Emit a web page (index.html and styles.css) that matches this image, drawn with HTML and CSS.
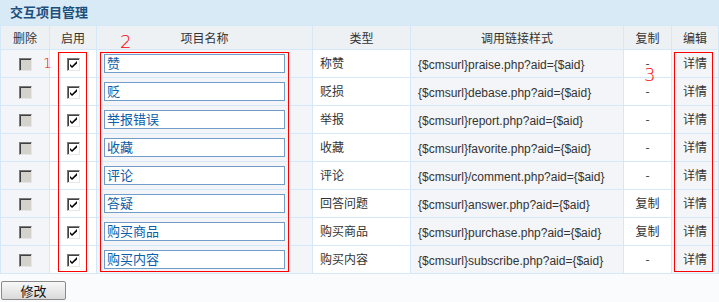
FILE: index.html
```html
<!DOCTYPE html>
<html>
<head>
<meta charset="utf-8">
<link rel="stylesheet" href="styles.css">
</head>
<body>
<div class="page">
  <div class="title">交互项目管理</div>
  <table class="grid">
    <colgroup>
      <col class="c1"><col class="c2"><col class="c3"><col class="c4"><col class="c5"><col class="c6"><col class="c7">
    </colgroup>
    <thead>
      <tr><th>删除</th><th>启用</th><th>项目名称</th><th>类型</th><th>调用链接样式</th><th>复制</th><th>编辑</th></tr>
    </thead>
    <tbody>
      <tr><td class="pat"><span class="cb dis"></span></td><td><span class="cb on"><svg viewBox="0 0 9 9"><path d="M1 4 L3 6 L8 1 L8 3.5 L3 8 L1 6Z" fill="#000"/></svg></span></td><td class="pat"><div class="inp">赞</div></td><td class="txt">称赞</td><td class="pat txt url">{$cmsurl}praise.php?aid={$aid}</td><td class="mid">-</td><td class="pat mid">详情</td></tr>
      <tr><td class="pat"><span class="cb dis"></span></td><td><span class="cb on"><svg viewBox="0 0 9 9"><path d="M1 4 L3 6 L8 1 L8 3.5 L3 8 L1 6Z" fill="#000"/></svg></span></td><td class="pat"><div class="inp">贬</div></td><td class="txt">贬损</td><td class="pat txt url">{$cmsurl}debase.php?aid={$aid}</td><td class="mid">-</td><td class="pat mid">详情</td></tr>
      <tr><td class="pat"><span class="cb dis"></span></td><td><span class="cb on"><svg viewBox="0 0 9 9"><path d="M1 4 L3 6 L8 1 L8 3.5 L3 8 L1 6Z" fill="#000"/></svg></span></td><td class="pat"><div class="inp">举报错误</div></td><td class="txt">举报</td><td class="pat txt url">{$cmsurl}report.php?aid={$aid}</td><td class="mid">-</td><td class="pat mid">详情</td></tr>
      <tr><td class="pat"><span class="cb dis"></span></td><td><span class="cb on"><svg viewBox="0 0 9 9"><path d="M1 4 L3 6 L8 1 L8 3.5 L3 8 L1 6Z" fill="#000"/></svg></span></td><td class="pat"><div class="inp">收藏</div></td><td class="txt">收藏</td><td class="pat txt url">{$cmsurl}favorite.php?aid={$aid}</td><td class="mid">-</td><td class="pat mid">详情</td></tr>
      <tr><td class="pat"><span class="cb dis"></span></td><td><span class="cb on"><svg viewBox="0 0 9 9"><path d="M1 4 L3 6 L8 1 L8 3.5 L3 8 L1 6Z" fill="#000"/></svg></span></td><td class="pat"><div class="inp">评论</div></td><td class="txt">评论</td><td class="pat txt url">{$cmsurl}/comment.php?aid={$aid}</td><td class="mid">-</td><td class="pat mid">详情</td></tr>
      <tr><td class="pat"><span class="cb dis"></span></td><td><span class="cb on"><svg viewBox="0 0 9 9"><path d="M1 4 L3 6 L8 1 L8 3.5 L3 8 L1 6Z" fill="#000"/></svg></span></td><td class="pat"><div class="inp">答疑</div></td><td class="txt">回答问题</td><td class="pat txt url">{$cmsurl}answer.php?aid={$aid}</td><td class="mid">复制</td><td class="pat mid">详情</td></tr>
      <tr><td class="pat"><span class="cb dis"></span></td><td><span class="cb on"><svg viewBox="0 0 9 9"><path d="M1 4 L3 6 L8 1 L8 3.5 L3 8 L1 6Z" fill="#000"/></svg></span></td><td class="pat"><div class="inp">购买商品</div></td><td class="txt">购买商品</td><td class="pat txt url">{$cmsurl}purchase.php?aid={$aid}</td><td class="mid">复制</td><td class="pat mid">详情</td></tr>
      <tr><td class="pat"><span class="cb dis"></span></td><td><span class="cb on"><svg viewBox="0 0 9 9"><path d="M1 4 L3 6 L8 1 L8 3.5 L3 8 L1 6Z" fill="#000"/></svg></span></td><td class="pat"><div class="inp">购买内容</div></td><td class="txt">购买内容</td><td class="pat txt url">{$cmsurl}subscribe.php?aid={$aid}</td><td class="mid">-</td><td class="pat mid">详情</td></tr>
    </tbody>
  </table>
  <div class="actions"><button class="btn">修改</button></div>

  <div class="mark box1"></div>
  <div class="mark box2"></div>
  <div class="mark box3"></div>
  <span class="num n1">1</span>
  <span class="num n2">2</span>
  <span class="num n3">3</span>
</div>
</body>
</html>
```

FILE: styles.css
```css
html, body {
  margin: 0;
  padding: 0;
  background: #fff;
}
body {
  font-family: "Liberation Sans", "Noto Sans CJK SC", sans-serif;
  font-size: 12px;
  line-height: 14px;
  color: #333;
}
.page {
  position: relative;
  width: 719px;
  height: 302px;
  overflow: hidden;
  background: #fafbfc;
}
.title {
  height: 25px;
  line-height: 24px;
  padding-left: 10px;
  background: #d9eaf7;
  color: #1d4f7c;
  font-weight: bold;
  font-size: 13px;
  font-family: "Noto Sans CJK SC", sans-serif;
  box-sizing: border-box;
}
.grid {
  border-collapse: collapse;
  table-layout: fixed;
  width: 718px;
  margin-left: 0;
}
.grid col.c1 { width: 49px; }
.grid col.c2 { width: 47px; }
.grid col.c3 { width: 216px; }
.grid col.c4 { width: 98px; }
.grid col.c5 { width: 213px; }
.grid col.c6 { width: 48px; }
.grid col.c7 { width: 47px; }
.grid th, .grid td {
  border: 1px solid #d5e8f7;
  padding: 0;
  line-height: 14px;
}
.grid th {
  height: 23px;
  background: #eef1f3;
  font-weight: normal;
  font-family: "Noto Sans CJK SC", sans-serif;
  font-size: 12px;
  color: #333;
  text-align: center;
}
.grid td {
  height: 27px;
  background: #fff;
  text-align: center;
}
.grid td.pat {
  background: #f3f5f8;
}
.grid td.txt {
  text-align: left;
  padding-left: 7px;
  padding-bottom: 2px;
  height: 25px;
  font-family: "Noto Sans CJK SC", sans-serif;
}
.grid td.url {
  font-family: "Liberation Sans", sans-serif;
  padding-left: 7px;
  padding-top: 2px;
  padding-bottom: 0;
}
.grid td.mid {
  font-family: "Noto Sans CJK SC", sans-serif;
  padding-bottom: 2px;
  height: 25px;
}
.cb {
  display: inline-flex;
  align-items: center;
  justify-content: center;
  width: 13px;
  height: 13px;
  box-sizing: border-box;
  border-top: 1px solid #7a7a7a;
  border-left: 1px solid #7a7a7a;
  border-right: 1px solid #e6e6e6;
  border-bottom: 1px solid #e6e6e6;
  vertical-align: middle;
}
.cb.dis {
  background: #d4d2cc;
  box-shadow: inset 1px 1px 0 #404040;
}
.cb.on {
  background: #fff;
  box-shadow: inset 1px 1px 0 #404040;
}
.cb svg {
  display: block;
  width: 9px;
  height: 9px;
  margin: 1px 0 0 1px;
}
.inp {
  width: 181px;
  height: 19px;
  margin-left: 7px;
  box-sizing: border-box;
  border: 1px solid #6f9cc9;
  background: #fff;
  color: #0b5ea8;
  font-family: "Noto Sans CJK SC", sans-serif;
  font-size: 13px;
  line-height: 15px;
  text-align: left;
  padding-left: 2px;
  overflow: hidden;
}
.actions {
  padding: 7px 0 0 1px;
}
.btn {
  display: block;
  width: 65px;
  height: 19px;
  padding: 0;
  border: 1px solid #8a8a8a;
  border-radius: 2px;
  background: linear-gradient(#f8f8f8, #dadada);
  font-family: "Noto Sans CJK SC", sans-serif;
  font-size: 13px;
  line-height: 15px;
  color: #111;
}
.mark {
  position: absolute;
  border: 1px solid #ff0000;
  box-sizing: border-box;
}
.box1 { left: 58px; top: 52px; width: 29px; height: 220px; }
.box2 { left: 100px; top: 52px; width: 189px; height: 220px; }
.box3 { left: 674px; top: 52px; width: 39px; height: 220px; }
.num {
  position: absolute;
  color: #ff0000;
  font-family: "DejaVu Sans", sans-serif;
  font-weight: 200;
  line-height: 1;
}
.n1 { left: 43px; top: 56px; font-size: 14px; }
.n2 { left: 120px; top: 33px; font-size: 18px; }
.n3 { left: 644px; top: 66px; font-size: 18px; }
```
